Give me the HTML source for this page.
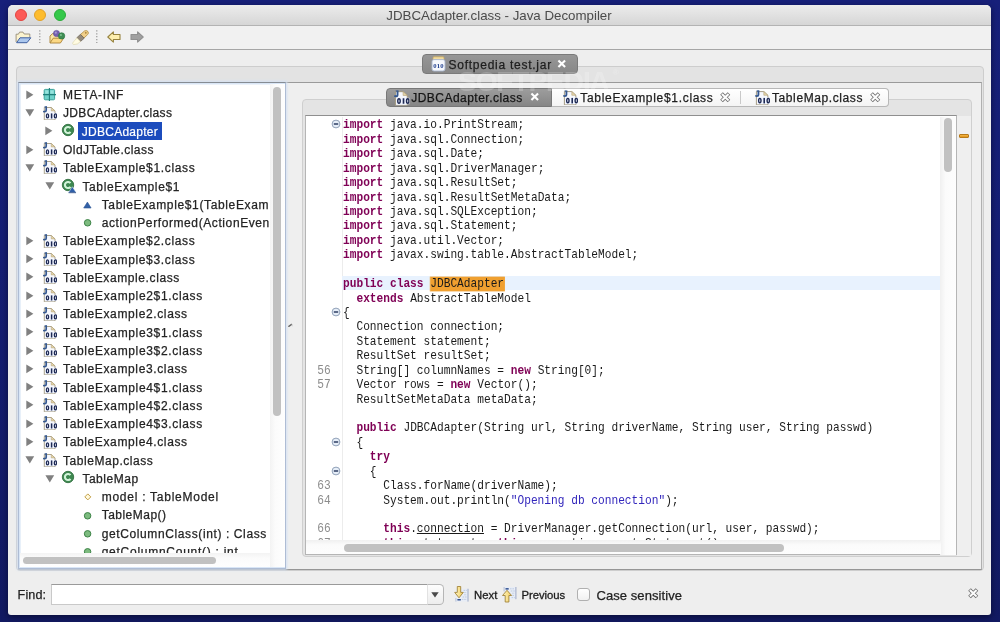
<!DOCTYPE html>
<html><head><meta charset="utf-8"><title>JDBCAdapter.class - Java Decompiler</title>
<style>
html,body{margin:0;padding:0;}
body{width:1000px;height:622px;overflow:hidden;position:relative;font-family:"Liberation Sans",sans-serif;
 background:linear-gradient(180deg,#17207a 0%,#151e74 40%,#121a62 100%);}
.abs,.a{position:absolute;}
svg{overflow:visible;display:block}
#win{position:absolute;left:8px;top:5px;width:983px;height:610px;background:#eeeeee;border-radius:5px 5px 3px 3px;
 box-shadow:0 2px 6px rgba(0,0,20,.55);overflow:hidden;}
#title{position:absolute;left:0;top:0;width:983px;height:20px;background:linear-gradient(180deg,#ececec,#d6d6d6);border-bottom:1px solid #b3b3b3;}
#ttext{position:absolute;left:0;width:983px;top:2.9px;text-align:center;font-size:13.3px;color:#4b4b4b;line-height:16px;text-indent:-1px}
.tf{position:absolute;border-radius:50%;width:12px;height:12px;top:4px;box-sizing:border-box}
#toolbar{position:absolute;left:0;top:21px;width:983px;height:23px;background:#f1f1f1;border-bottom:1.2px solid #a6a6a6;}
/* everything below positioned relative to body for accuracy */
#outerband{position:absolute;left:15.5px;top:65.6px;width:968px;height:505.6px;box-sizing:border-box;background:#e3e3e3;border:1px solid #cdcdcd;border-radius:4px;}
#outercontent{position:absolute;left:18px;top:82px;width:963.7px;height:488px;box-sizing:border-box;background:#efefef;border:1px solid #b0b0b0;border-top:1.4px solid #9a9a9a;border-bottom:1.3px solid #969696;}
#otab{position:absolute;left:422px;top:54px;width:155.5px;height:20px;box-sizing:border-box;border-radius:4px;background:linear-gradient(180deg,#979797,#888888);border:1px solid #7a7a7a;}
#innerband{position:absolute;left:302px;top:99px;width:669.9px;height:458.3px;box-sizing:border-box;background:#e4e4e4;border:1px solid #cfcfcf;border-radius:4px;}
#innerstrip{position:absolute;left:957px;top:115.5px;width:13.7px;height:440px;background:#efefef;}
#codebox{position:absolute;left:304.6px;top:115.2px;width:652.2px;height:440px;box-sizing:border-box;background:#fff;border:1px solid #b5b5b5;border-top:1.3px solid #8f8f8f;overflow:hidden}
#itab1{position:absolute;left:386px;top:88px;width:165.5px;height:19.2px;box-sizing:border-box;border-radius:4px 0 0 4px;background:linear-gradient(180deg,#9d9d9d,#868686);border:1px solid #787878;}
#itabs{position:absolute;left:551px;top:88px;width:337.5px;height:18.6px;box-sizing:border-box;border-radius:0 4px 4px 0;background:linear-gradient(180deg,#ffffff,#f4f4f4);border:1px solid #b8b8b8;border-left:none}
.tabtxt{position:absolute;font-size:12px;line-height:14px;color:#1e1e1e;white-space:nowrap;-webkit-text-stroke:0.25px #1e1e1e}
#tree{position:absolute;left:18.3px;top:82.3px;width:268px;height:487px;box-sizing:border-box;background:#fff;border:1px solid #aebcd4;border-top:1.4px solid #868c94;box-shadow:inset 0 0 0 1.6px #d9e6f6, 0 0 2.5px 0.8px #d3e1f3;}
#treeclip{position:absolute;left:20px;top:84px;width:249.6px;height:469.1px;overflow:hidden;}
#treeinner{position:absolute;left:-20px;top:-84px;width:400px;height:700px}

.sel{position:absolute;background:#1c4cbd;}
div.tl{position:absolute;height:18.27px;line-height:20.2px;font-size:12px;color:#242424;-webkit-text-stroke:0.25px #242424;white-space:nowrap;box-sizing:content-box}
div.selt{color:#fff;-webkit-text-stroke:0.2px #fff}
.cl{position:absolute;left:343.2px;font-family:"Liberation Mono",monospace;font-size:12.2px;line-height:14.39px;height:14.39px;white-space:pre;color:#1a1a1a;transform:scaleX(0.9176);transform-origin:0 0}
.ln{position:absolute;left:300px;width:34.7px;text-align:right;font-family:"Liberation Mono",monospace;font-size:12.2px;line-height:14.39px;color:#8c8c8c;transform:scaleX(0.9176);transform-origin:100% 0;left:295.8px}
.k{color:#7f0055;font-weight:bold}
.s{color:#3226bc}
.u{text-decoration:underline}
.o{background:#f0a030;box-shadow:0 0 0 0.4px #f0a030}
.hl{position:absolute;left:342.3px;width:598px;height:14px;background:#e8f2fe}
.sb{position:absolute;background:#c1c1c1;border-radius:4px}
.small{position:absolute;font-size:11.3px;color:#1c1c1c;white-space:nowrap;line-height:14px;-webkit-text-stroke:0.3px #1c1c1c}
#all{position:absolute;left:0;top:0;width:1000px;height:622px;filter:blur(0.32px)}
</style></head><body><div id="all">
<svg width="0" height="0" style="position:absolute">
<defs>
<symbol id="i-cf" viewBox="0 0 14 14">
 <path d="M1.3 1.5 H8.25 L12 4.9 V13.9 H1.3 Z" fill="#f6f8fd" stroke="#a39a80" stroke-width="0.9"/>
 <path d="M8.25 1.5 V4.9 H12 Z" fill="#e6d6aa" stroke="#b6a47c" stroke-width="0.6"/>
 <rect x="2.4" y="7" width="12" height="5.9" fill="#eef3ff" opacity="0.85"/>
 <ellipse cx="4.5" cy="9.9" rx="1.1" ry="2.05" fill="none" stroke="#1e2a55" stroke-width="1.3"/>
 <path d="M8.6 7.4 V12.5" stroke="#1e2a55" stroke-width="1.5"/>
 <ellipse cx="12.4" cy="9.9" rx="1.1" ry="2.05" fill="none" stroke="#1e2a55" stroke-width="1.3"/>
 <path d="M3.2 0.6 V4.2 Q3.2 5.7 1.7 5.7 Q0.8 5.7 0.4 5" fill="none" stroke="#35588f" stroke-width="1.7"/>
 <path d="M1.5 0.9 H4" stroke="#35588f" stroke-width="1.1"/>
</symbol>
<symbol id="i-cls" viewBox="0 0 16 16">
 <circle cx="7" cy="7" r="5.7" fill="#3d8850" stroke="#347243" stroke-width="0.9"/>
 <path d="M9.45 5.2 A3.05 3.05 0 1 0 9.45 8.8" fill="none" stroke="#d2f4d9" stroke-width="2.1"/>
</symbol>
<symbol id="i-clsi" viewBox="0 0 16 16">
 <circle cx="7" cy="7" r="5.7" fill="#3d8850" stroke="#347243" stroke-width="0.9"/>
 <path d="M9.45 5.2 A3.05 3.05 0 1 0 9.45 8.8" fill="none" stroke="#d2f4d9" stroke-width="2.1"/>
 <path d="M11.3 8.7 L15.1 14.6 L7.5 14.6 Z" fill="#2f5fa8" stroke="#dcecf8" stroke-width="0.5"/>
 <path d="M7.6 14.7 H15" stroke="#1f3f78" stroke-width="0.8"/>
</symbol>
<symbol id="i-pkg" viewBox="0 0 13 13">
 <rect x="1.2" y="1.4" width="10.4" height="10.4" rx="1" fill="#6fd3cb" stroke="#3ba39c" stroke-width="1"/>
 <path d="M6.4 0 V13 M0 6.6 H13" stroke="#1f7f7a" stroke-width="1.1"/>
 <rect x="2.2" y="2.4" width="3.2" height="3.2" fill="#a8ebe5" opacity="0.7"/>
 <rect x="7.4" y="2.4" width="3.2" height="3.2" fill="#a8ebe5" opacity="0.7"/>
</symbol>
<symbol id="i-fold" viewBox="0 0 10 10">
 <circle cx="5" cy="5" r="3.9" fill="#e6eef8" stroke="#91a1b8" stroke-width="1"/>
 <path d="M2.8 5 H7.2" stroke="#1f3056" stroke-width="1.4"/>
</symbol>
<symbol id="i-x" viewBox="0 0 10 10">
 <path d="M1.5 1.5 L8.5 8.5 M8.5 1.5 L1.5 8.5" stroke="#fff" stroke-width="2.2" stroke-linecap="butt"/>
</symbol>
<symbol id="i-xo" viewBox="0 0 11 11">
 <path d="M1.6 1.6 L9.4 9.4 M9.4 1.6 L1.6 9.4" stroke="#6c6c6c" stroke-width="3.9" stroke-linecap="butt"/>
 <path d="M2 2 L9 9 M9 2 L2 9" stroke="#fcfcfc" stroke-width="2.2" stroke-linecap="butt"/>
</symbol>
<symbol id="i-jar" viewBox="0 0 15 16">
 <rect x="2" y="0.8" width="11" height="3" rx="1" fill="#f1dca0" stroke="#c8a960" stroke-width="0.8"/>
 <rect x="1" y="3.6" width="13" height="11.4" rx="2" fill="#f7f9fd" stroke="#a9b7cf" stroke-width="0.9"/>
 <text x="2.2" y="12.2" font-family="Liberation Serif" font-weight="bold" font-size="6.6" fill="#1f3f8f" letter-spacing="0.2">010</text>
</symbol>
</defs></svg>

<div id="win">
 <div id="title">
  <div class="tf" style="left:7px;background:#fc5b57;border:0.6px solid #e2453f"></div>
  <div class="tf" style="left:26.3px;background:#fdbc2e;border:0.6px solid #e0a028"></div>
  <div class="tf" style="left:45.7px;background:#35c84a;border:0.6px solid #2aab3a"></div>
  <div id="ttext">JDBCAdapter.class - Java Decompiler</div>
 </div>
 <div id="toolbar"></div>
</div>

<!-- toolbar icons (body coords) -->
<svg class="a" style="left:15px;top:31px" width="16" height="13" viewBox="0 0 16 13">
 <path d="M1.1 11 V3.2 H3.4 L4.6 1.1 H8 L9.2 3 H14.8 V6.6" fill="#fbf3cf" stroke="#958b76" stroke-width="0.9" stroke-linejoin="round"/>
 <path d="M1.6 11.7 L5 6.8 H15.8 L12 11.7 Z" fill="#abc7ee" stroke="#3f60a0" stroke-width="1" stroke-linejoin="round"/>
</svg>
<svg class="a" style="left:39.1px;top:30px" width="2" height="14"><path d="M0.8 0.3 V13.5" stroke="#8e8e8e" stroke-width="1.1" stroke-dasharray="1.2 1.7"/></svg>
<svg class="a" style="left:48.5px;top:30px" width="17" height="14" viewBox="0 0 17 14">
 <path d="M1 12.8 V6 L3.6 3.6 H8 V6 H13 V8" fill="#fbe7a4" stroke="#a98135" stroke-width="0.9"/>
 <path d="M1 13 L4.2 8.2 H14.6 L11.4 13 Z" fill="#fbd884" stroke="#a98135" stroke-width="0.9"/>
 <circle cx="7.5" cy="3.5" r="3.1" fill="#7460b0" stroke="#5c4799" stroke-width="0.6"/>
 <circle cx="6.8" cy="2.7" r="1.1" fill="#b3a2df" opacity="0.8"/>
 <circle cx="12.6" cy="5.9" r="3.2" fill="#3f8c53" stroke="#2c7541" stroke-width="0.6"/>
 <circle cx="11.9" cy="5" r="1.1" fill="#8fd0a0" opacity="0.8"/>
</svg>
<svg class="a" style="left:72px;top:30px" width="17" height="15" viewBox="0 0 17 15">
 <path d="M8.6 4.4 L12.6 0.9 Q14.8 0 16 1.6 Q17 3.4 15.6 4.6 L12 8 Z" fill="#f1cf8a" stroke="#b8954c" stroke-width="0.9"/>
 <path d="M8.4 4.4 L12.2 8.2 L8.4 11.6 L4.8 7.8 Z" fill="#948a7c" stroke="#6e675c" stroke-width="0.8"/>
 <path d="M4.8 7.8 L8.4 11.6 Q6 14.8 1.4 14.6 Q-0.2 13.4 1.4 11.8 Q3.6 10.2 4.8 7.8 Z" fill="#fffbe2" stroke="#dcd5ac" stroke-width="0.7"/>
 <circle cx="13.8" cy="2.8" r="0.9" fill="#a98135"/>
</svg>
<svg class="a" style="left:95.9px;top:30px" width="2" height="14"><path d="M0.8 0.3 V13.5" stroke="#8e8e8e" stroke-width="1.1" stroke-dasharray="1.2 1.7"/></svg>
<svg class="a" style="left:106.5px;top:30.9px" width="14" height="12" viewBox="0 0 14 12">
 <path d="M0.8 6 L6.4 0.9 V3.5 H13 V8.5 H6.4 V11.1 Z" fill="#fdefae" stroke="#96823f" stroke-width="1.1" stroke-linejoin="round"/>
</svg>
<svg class="a" style="left:130px;top:30.9px" width="14" height="12" viewBox="0 0 14 12">
 <path d="M13.2 6 L7.6 0.9 V3.5 H1 V8.5 H7.6 V11.1 Z" fill="#a0a0a0" stroke="#909090" stroke-width="1.1" stroke-linejoin="round"/>
</svg>

<div id="outerband"></div>
<div id="outercontent"></div>
<div id="otab"></div>
<svg class="a" style="left:430.5px;top:55.5px" width="15" height="16"><use href="#i-jar"/></svg>
<div class="tabtxt" style="left:448.5px;top:57.7px;letter-spacing:0.741px">Softpedia test.jar</div>
<svg class="a" style="left:557px;top:59.4px" width="9.5" height="9.5"><use href="#i-x"/></svg>

<!-- watermark -->
<div id="wm" class="abs" style="left:458px;top:66.7px;font-size:28px;font-weight:bold;color:#fff;opacity:0.2;letter-spacing:-1.05px;line-height:30px;white-space:nowrap;z-index:50;pointer-events:none">SOFTPEDIA<span style="font-size:8px;vertical-align:top;line-height:12px;letter-spacing:0;margin-left:4px">&#174;</span></div>

<div id="tree"></div>
<div id="treeclip"><div id="treeinner">
<svg class="a" style="left:25.9px;top:89.7px" width="8" height="10" viewBox="0 0 8 10"><path d="M0.3 0.4 L7.4 4.8 L0.3 9.2 Z" fill="#808080"/></svg>
<svg class="a" style="left:43.3px;top:87.8px" width="13" height="13"><use href="#i-pkg"/></svg>
<div class="tl" style="left:63.0px;top:85.20px;letter-spacing:0.654px">META-INF</div>
<svg class="a" style="left:25.2px;top:109.2px" width="10" height="8" viewBox="0 0 10 8"><path d="M0.4 0.3 L9.2 0.3 L4.8 7.4 Z" fill="#808080"/></svg>
<svg class="a" style="left:43.0px;top:105.6px" width="14" height="14"><use href="#i-cf"/></svg>
<div class="tl" style="left:63.0px;top:103.47px;letter-spacing:0.348px">JDBCAdapter.class</div>
<svg class="a" style="left:45.2px;top:126.3px" width="8" height="10" viewBox="0 0 8 10"><path d="M0.3 0.4 L7.4 4.8 L0.3 9.2 Z" fill="#808080"/></svg>
<svg class="a" style="left:60.8px;top:123.2px" width="16" height="16"><use href="#i-cls"/></svg>
<div class="sel" style="left:78px;top:122.0px;width:84px;height:17.9px"></div>
<div class="tl selt" style="left:81.7px;top:121.74px;letter-spacing:0.276px">JDBCAdapter</div>
<svg class="a" style="left:25.9px;top:144.5px" width="8" height="10" viewBox="0 0 8 10"><path d="M0.3 0.4 L7.4 4.8 L0.3 9.2 Z" fill="#808080"/></svg>
<svg class="a" style="left:43.0px;top:142.1px" width="14" height="14"><use href="#i-cf"/></svg>
<div class="tl" style="left:63.0px;top:140.01px;letter-spacing:0.458px">OldJTable.class</div>
<svg class="a" style="left:25.2px;top:164.0px" width="10" height="8" viewBox="0 0 10 8"><path d="M0.4 0.3 L9.2 0.3 L4.8 7.4 Z" fill="#808080"/></svg>
<svg class="a" style="left:43.0px;top:160.4px" width="14" height="14"><use href="#i-cf"/></svg>
<div class="tl" style="left:63.0px;top:158.28px;letter-spacing:0.645px">TableExample$1.class</div>
<svg class="a" style="left:44.5px;top:182.3px" width="10" height="8" viewBox="0 0 10 8"><path d="M0.4 0.3 L9.2 0.3 L4.8 7.4 Z" fill="#808080"/></svg>
<svg class="a" style="left:60.8px;top:178.0px" width="16" height="16"><use href="#i-clsi"/></svg>
<div class="tl" style="left:82.4px;top:176.55px;letter-spacing:0.641px">TableExample$1</div>
<svg class="a" style="left:83.3px;top:200.6px" width="9" height="8"><path d="M4.4 1.1 L8.1 7 L0.7 7 Z" fill="#3361a6" stroke="#2a5496" stroke-width="0.6" stroke-linejoin="round"/></svg>
<div class="tl" style="left:101.7px;top:194.82px;letter-spacing:0.642px">TableExample$1(TableExam</div>
<svg class="a" style="left:83.0px;top:218.2px" width="10" height="10"><circle cx="4.6" cy="4.8" r="3.25" fill="#7dbb7f" stroke="#3c8347" stroke-width="1"/></svg>
<div class="tl" style="left:101.7px;top:213.09px;letter-spacing:0.594px">actionPerformed(ActionEven</div>
<svg class="a" style="left:25.9px;top:235.9px" width="8" height="10" viewBox="0 0 8 10"><path d="M0.3 0.4 L7.4 4.8 L0.3 9.2 Z" fill="#808080"/></svg>
<svg class="a" style="left:43.0px;top:233.5px" width="14" height="14"><use href="#i-cf"/></svg>
<div class="tl" style="left:63.0px;top:231.36px;letter-spacing:0.645px">TableExample$2.class</div>
<svg class="a" style="left:25.9px;top:254.2px" width="8" height="10" viewBox="0 0 8 10"><path d="M0.3 0.4 L7.4 4.8 L0.3 9.2 Z" fill="#808080"/></svg>
<svg class="a" style="left:43.0px;top:251.8px" width="14" height="14"><use href="#i-cf"/></svg>
<div class="tl" style="left:63.0px;top:249.63px;letter-spacing:0.645px">TableExample$3.class</div>
<svg class="a" style="left:25.9px;top:272.4px" width="8" height="10" viewBox="0 0 8 10"><path d="M0.3 0.4 L7.4 4.8 L0.3 9.2 Z" fill="#808080"/></svg>
<svg class="a" style="left:43.0px;top:270.0px" width="14" height="14"><use href="#i-cf"/></svg>
<div class="tl" style="left:63.0px;top:267.90px;letter-spacing:0.603px">TableExample.class</div>
<svg class="a" style="left:25.9px;top:290.7px" width="8" height="10" viewBox="0 0 8 10"><path d="M0.3 0.4 L7.4 4.8 L0.3 9.2 Z" fill="#808080"/></svg>
<svg class="a" style="left:43.0px;top:288.3px" width="14" height="14"><use href="#i-cf"/></svg>
<div class="tl" style="left:63.0px;top:286.17px;letter-spacing:0.658px">TableExample2$1.class</div>
<svg class="a" style="left:25.9px;top:309.0px" width="8" height="10" viewBox="0 0 8 10"><path d="M0.3 0.4 L7.4 4.8 L0.3 9.2 Z" fill="#808080"/></svg>
<svg class="a" style="left:43.0px;top:306.6px" width="14" height="14"><use href="#i-cf"/></svg>
<div class="tl" style="left:63.0px;top:304.44px;letter-spacing:0.630px">TableExample2.class</div>
<svg class="a" style="left:25.9px;top:327.2px" width="8" height="10" viewBox="0 0 8 10"><path d="M0.3 0.4 L7.4 4.8 L0.3 9.2 Z" fill="#808080"/></svg>
<svg class="a" style="left:43.0px;top:324.8px" width="14" height="14"><use href="#i-cf"/></svg>
<div class="tl" style="left:63.0px;top:322.71px;letter-spacing:0.658px">TableExample3$1.class</div>
<svg class="a" style="left:25.9px;top:345.5px" width="8" height="10" viewBox="0 0 8 10"><path d="M0.3 0.4 L7.4 4.8 L0.3 9.2 Z" fill="#808080"/></svg>
<svg class="a" style="left:43.0px;top:343.1px" width="14" height="14"><use href="#i-cf"/></svg>
<div class="tl" style="left:63.0px;top:340.98px;letter-spacing:0.658px">TableExample3$2.class</div>
<svg class="a" style="left:25.9px;top:363.8px" width="8" height="10" viewBox="0 0 8 10"><path d="M0.3 0.4 L7.4 4.8 L0.3 9.2 Z" fill="#808080"/></svg>
<svg class="a" style="left:43.0px;top:361.4px" width="14" height="14"><use href="#i-cf"/></svg>
<div class="tl" style="left:63.0px;top:359.25px;letter-spacing:0.630px">TableExample3.class</div>
<svg class="a" style="left:25.9px;top:382.1px" width="8" height="10" viewBox="0 0 8 10"><path d="M0.3 0.4 L7.4 4.8 L0.3 9.2 Z" fill="#808080"/></svg>
<svg class="a" style="left:43.0px;top:379.7px" width="14" height="14"><use href="#i-cf"/></svg>
<div class="tl" style="left:63.0px;top:377.52px;letter-spacing:0.658px">TableExample4$1.class</div>
<svg class="a" style="left:25.9px;top:400.3px" width="8" height="10" viewBox="0 0 8 10"><path d="M0.3 0.4 L7.4 4.8 L0.3 9.2 Z" fill="#808080"/></svg>
<svg class="a" style="left:43.0px;top:397.9px" width="14" height="14"><use href="#i-cf"/></svg>
<div class="tl" style="left:63.0px;top:395.79px;letter-spacing:0.658px">TableExample4$2.class</div>
<svg class="a" style="left:25.9px;top:418.6px" width="8" height="10" viewBox="0 0 8 10"><path d="M0.3 0.4 L7.4 4.8 L0.3 9.2 Z" fill="#808080"/></svg>
<svg class="a" style="left:43.0px;top:416.2px" width="14" height="14"><use href="#i-cf"/></svg>
<div class="tl" style="left:63.0px;top:414.06px;letter-spacing:0.658px">TableExample4$3.class</div>
<svg class="a" style="left:25.9px;top:436.9px" width="8" height="10" viewBox="0 0 8 10"><path d="M0.3 0.4 L7.4 4.8 L0.3 9.2 Z" fill="#808080"/></svg>
<svg class="a" style="left:43.0px;top:434.5px" width="14" height="14"><use href="#i-cf"/></svg>
<div class="tl" style="left:63.0px;top:432.33px;letter-spacing:0.630px">TableExample4.class</div>
<svg class="a" style="left:25.2px;top:456.3px" width="10" height="8" viewBox="0 0 10 8"><path d="M0.4 0.3 L9.2 0.3 L4.8 7.4 Z" fill="#808080"/></svg>
<svg class="a" style="left:43.0px;top:452.7px" width="14" height="14"><use href="#i-cf"/></svg>
<div class="tl" style="left:63.0px;top:450.60px;letter-spacing:0.549px">TableMap.class</div>
<svg class="a" style="left:44.5px;top:474.6px" width="10" height="8" viewBox="0 0 10 8"><path d="M0.4 0.3 L9.2 0.3 L4.8 7.4 Z" fill="#808080"/></svg>
<svg class="a" style="left:60.8px;top:470.3px" width="16" height="16"><use href="#i-cls"/></svg>
<div class="tl" style="left:82.4px;top:468.87px;letter-spacing:0.521px">TableMap</div>
<svg class="a" style="left:83.0px;top:491.7px" width="10" height="10"><path d="M4.8 1.9 L7.8 4.9 L4.8 7.9 L1.8 4.9 Z" fill="#fff9de" stroke="#c4a046" stroke-width="1"/></svg>
<div class="tl" style="left:101.7px;top:487.14px;letter-spacing:0.742px">model : TableModel</div>
<svg class="a" style="left:83.0px;top:510.5px" width="10" height="10"><circle cx="4.6" cy="4.8" r="3.25" fill="#7dbb7f" stroke="#3c8347" stroke-width="1"/></svg>
<div class="tl" style="left:101.7px;top:505.41px;letter-spacing:0.477px">TableMap()</div>
<svg class="a" style="left:83.0px;top:528.8px" width="10" height="10"><circle cx="4.6" cy="4.8" r="3.25" fill="#7dbb7f" stroke="#3c8347" stroke-width="1"/></svg>
<div class="tl" style="left:101.7px;top:523.68px;letter-spacing:0.611px">getColumnClass(int) : Class</div>
<svg class="a" style="left:83.0px;top:547.1px" width="10" height="10"><circle cx="4.6" cy="4.8" r="3.25" fill="#7dbb7f" stroke="#3c8347" stroke-width="1"/></svg>
<div class="tl" style="left:101.7px;top:541.95px;letter-spacing:0.735px">getColumnCount() : int</div>
</div></div>
<!-- tree scrollbars -->
<div class="abs" style="left:269.6px;top:84.4px;width:15px;height:483px;background:linear-gradient(90deg,#f3f3f3,#fbfbfb 35%,#fefefe)"></div>
<div class="abs" style="left:20.2px;top:553.1px;width:249.4px;height:14.4px;background:linear-gradient(180deg,#f3f3f3,#fbfbfb 35%,#fefefe)"></div>
<div class="sb" style="left:273.4px;top:86.6px;width:7.8px;height:329px"></div>
<div class="sb" style="left:23.2px;top:556.8px;width:192.6px;height:7.5px"></div>
<!-- split handle -->
<svg class="a" style="left:287.5px;top:323px" width="6" height="5"><path d="M0.8 3.4 L3.6 1.4" stroke="#666" stroke-width="1.3" stroke-linecap="round"/><path d="M3.6 1.6 L4.4 3.2" stroke="#bbb" stroke-width="0.8"/></svg>

<div id="innerband"></div>
<div id="innerstrip"></div>
<div id="codebox"></div>
<!-- gutter line -->
<div class="abs" style="left:341.6px;top:116.5px;width:1px;height:425px;background:#ececec"></div>
<div class="abs" style="left:306px;top:116.5px;width:634px;height:423.7px;overflow:hidden"><div class="abs" style="left:-306px;top:-116.5px;width:1000px;height:700px">
<svg class="a" style="left:331.2px;top:119.2px" width="10" height="10"><use href="#i-fold"/></svg>
<div class="cl" style="top:118.45px"><span class="k">import</span> java.io.PrintStream;</div>
<div class="cl" style="top:132.88px"><span class="k">import</span> java.sql.Connection;</div>
<div class="cl" style="top:147.30px"><span class="k">import</span> java.sql.Date;</div>
<div class="cl" style="top:161.73px"><span class="k">import</span> java.sql.DriverManager;</div>
<div class="cl" style="top:176.15px"><span class="k">import</span> java.sql.ResultSet;</div>
<div class="cl" style="top:190.57px"><span class="k">import</span> java.sql.ResultSetMetaData;</div>
<div class="cl" style="top:205.00px"><span class="k">import</span> java.sql.SQLException;</div>
<div class="cl" style="top:219.43px"><span class="k">import</span> java.sql.Statement;</div>
<div class="cl" style="top:233.85px"><span class="k">import</span> java.util.Vector;</div>
<div class="cl" style="top:248.28px"><span class="k">import</span> javax.swing.table.AbstractTableModel;</div>
<div class="hl" style="top:276.4px"></div>
<div class="cl" style="top:277.12px"><span class="k">public class</span> <span class="o">JDBCAdapter</span></div>
<div class="cl" style="top:291.55px">  <span class="k">extends</span> AbstractTableModel</div>
<svg class="a" style="left:331.2px;top:306.8px" width="10" height="10"><use href="#i-fold"/></svg>
<div class="cl" style="top:305.98px">{</div>
<div class="cl" style="top:320.40px">  Connection connection;</div>
<div class="cl" style="top:334.82px">  Statement statement;</div>
<div class="cl" style="top:349.25px">  ResultSet resultSet;</div>
<div class="ln" style="top:363.68px">56</div>
<div class="cl" style="top:363.68px">  String[] columnNames = <span class="k">new</span> String[0];</div>
<div class="ln" style="top:378.10px">57</div>
<div class="cl" style="top:378.10px">  Vector rows = <span class="k">new</span> Vector();</div>
<div class="cl" style="top:392.52px">  ResultSetMetaData metaData;</div>
<div class="cl" style="top:421.38px">  <span class="k">public</span> JDBCAdapter(String url, String driverName, String user, String passwd)</div>
<svg class="a" style="left:331.2px;top:436.6px" width="10" height="10"><use href="#i-fold"/></svg>
<div class="cl" style="top:435.80px">  {</div>
<div class="cl" style="top:450.23px">    <span class="k">try</span></div>
<svg class="a" style="left:331.2px;top:465.5px" width="10" height="10"><use href="#i-fold"/></svg>
<div class="cl" style="top:464.65px">    {</div>
<div class="ln" style="top:479.07px">63</div>
<div class="cl" style="top:479.07px">      Class.forName(driverName);</div>
<div class="ln" style="top:493.50px">64</div>
<div class="cl" style="top:493.50px">      System.out.println(<span class="s">"Opening db connection"</span>);</div>
<div class="ln" style="top:522.35px">66</div>
<div class="cl" style="top:522.35px">      <span class="k">this</span>.<span class="u">connection</span> = DriverManager.getConnection(url, user, passwd);</div>
<div class="ln" style="top:536.78px">67</div>
<div class="cl" style="top:536.78px">      <span class="k">this</span>.<span class="u">statement</span> = <span class="k">this</span>.<span class="u">connection</span>.createStatement();</div>
</div></div>
<!-- code scrollbars -->
<div class="abs" style="left:940.3px;top:116.5px;width:15.6px;height:438px;background:linear-gradient(90deg,#f0f0f0,#fbfbfb 35%,#fdfdfd)"></div>
<div class="abs" style="left:305.6px;top:540.2px;width:635px;height:14.1px;background:linear-gradient(180deg,#f0f0f0,#fbfbfb 35%,#fdfdfd)"></div>
<div class="sb" style="left:943.9px;top:118.3px;width:7.9px;height:53.6px"></div>
<div class="sb" style="left:344px;top:544.2px;width:439.5px;height:7.6px"></div>
<!-- error strip marker -->
<div class="abs" style="left:958.6px;top:133.8px;width:10.4px;height:4.6px;background:linear-gradient(180deg,#f5b94a,#e0931a);border:0.6px solid #b87a18;border-radius:1px;box-sizing:border-box"></div>

<!-- inner tabs -->
<div id="itabs"></div>
<div id="itab1"></div>
<div class="abs" style="left:740.3px;top:91px;width:1px;height:13px;background:#c9c9c9"></div>
<svg class="a" style="left:394px;top:89.5px" width="15.5" height="15.5"><use href="#i-cf"/></svg>
<div class="tabtxt" style="left:411.2px;top:91.2px;color:#111;letter-spacing:0.478px">JDBCAdapter.class</div>
<svg class="a" style="left:529.6px;top:92.4px" width="9.5" height="9.5"><use href="#i-x"/></svg>
<svg class="a" style="left:563px;top:89.5px" width="15" height="15"><use href="#i-cf"/></svg>
<div class="tabtxt" style="left:580.3px;top:91.2px;letter-spacing:0.690px">TableExample$1.class</div>
<svg class="a" style="left:719.5px;top:92px" width="10.5" height="10.5"><use href="#i-xo"/></svg>
<svg class="a" style="left:754.5px;top:89.5px" width="15" height="15"><use href="#i-cf"/></svg>
<div class="tabtxt" style="left:772px;top:91.2px;letter-spacing:0.592px">TableMap.class</div>
<svg class="a" style="left:869.5px;top:92px" width="10.5" height="10.5"><use href="#i-xo"/></svg>

<!-- find bar -->
<div class="abs" style="left:17.6px;top:587.1px;font-size:12.6px;line-height:16px;color:#222;letter-spacing:0.1px;-webkit-text-stroke:0.25px #222">Find:</div>
<div class="abs" style="left:51px;top:583.6px;width:377px;height:21.6px;box-sizing:border-box;background:#fff;border:1px solid #c9c9c9;border-top:1.3px solid #9a9a9a;border-right:none"></div>
<div class="abs" style="left:426.5px;top:583.7px;width:17px;height:21.2px;box-sizing:border-box;background:linear-gradient(180deg,#fdfdfd,#ededed);border:1px solid #b6b6b6;border-left:1px solid #e2e2e2;border-radius:0 4.5px 4.5px 0"></div>
<svg class="a" style="left:431px;top:591.5px" width="8" height="6"><path d="M0.3 0.3 H7.7 L4 5.6 Z" fill="#4a4a4a"/></svg>

<svg class="a" style="left:453.5px;top:586px" width="15" height="16" viewBox="0 0 15 16">
 <defs><linearGradient id="ga" x1="0" y1="0" x2="1" y2="0"><stop offset="0" stop-color="#fff6c4"/><stop offset="1" stop-color="#f3cd5c"/></linearGradient></defs>
 <rect x="1.8" y="2.8" width="12.4" height="12.8" fill="#e6ecf7" opacity="0.8"/>
 <path d="M14 2.8 V15.6" stroke="#94a3c2" stroke-width="0.9"/>
 <path d="M1.9 12 V15.6" stroke="#a8b6d2" stroke-width="0.8"/>
 <path d="M9.5 4.4 H12.8 M10.2 6.6 H12.8 M10.2 8.8 H12.8 M8.6 11 H12.8 M7.8 13.4 H12.8" stroke="#b4c4de" stroke-width="0.8" stroke-dasharray="1.6 0.8"/>
 <path d="M3.3 0.5 H6.7 V6.4 H9.3 L5 11.8 L0.7 6.4 H3.3 Z" fill="url(#ga)" stroke="#a3843a" stroke-width="0.9" stroke-linejoin="round"/>
 <rect x="3.4" y="13" width="3.4" height="1.5" fill="#2f4f8f"/>
</svg>
<div class="small" style="left:474px;top:587.6px;letter-spacing:0.066px">Next</div>
<svg class="a" style="left:501.5px;top:585.5px" width="15" height="17" viewBox="0 0 15 17">
 <rect x="2.1" y="1" width="12" height="12.2" fill="#e6ecf7" opacity="0.8"/>
 <path d="M13.9 1 V13.2" stroke="#94a3c2" stroke-width="0.9"/>
 <path d="M2.1 1 V5.4" stroke="#a8b6d2" stroke-width="0.8"/>
 <path d="M8 2.8 H12.8 M8.8 5 H12.8 M10.2 7.2 H12.8 M10.4 9.4 H12.8 M9.6 11.6 H12.8" stroke="#b4c4de" stroke-width="0.8" stroke-dasharray="1.6 0.8"/>
 <path d="M3.2 16 H6.9 V9.5 H9.6 L5 4.3 L0.5 9.5 H3.2 Z" fill="url(#ga)" stroke="#a3843a" stroke-width="0.9" stroke-linejoin="round"/>
 <rect x="3.5" y="2.1" width="3.2" height="1.5" fill="#2f4f8f"/>
</svg>
<div class="small" style="left:521.5px;top:587.6px;letter-spacing:-0.058px">Previous</div>
<div class="abs" style="left:576.5px;top:588.4px;width:13px;height:13px;box-sizing:border-box;background:linear-gradient(180deg,#ffffff,#f1f1f1);border:1px solid #b0b0b0;border-radius:3px"></div>
<div class="abs" style="left:596.5px;top:587.8px;font-size:13px;line-height:16px;color:#222;white-space:nowrap;-webkit-text-stroke:0.25px #222;letter-spacing:0.069px">Case sensitive</div>
<svg class="a" style="left:967.8px;top:588.4px" width="10.5" height="10.5"><use href="#i-xo"/></svg>
</div></body></html>
